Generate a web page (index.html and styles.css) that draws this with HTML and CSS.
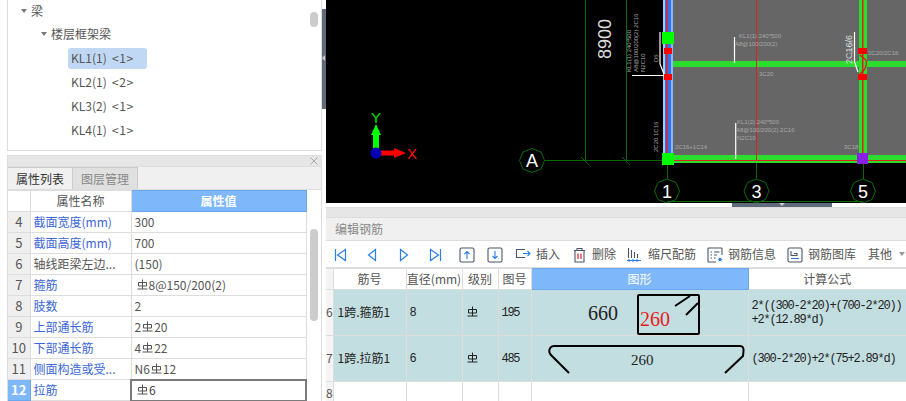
FILE: index.html
```html
<!DOCTYPE html>
<html lang="zh">
<head>
<meta charset="utf-8">
<title>编辑钢筋</title>
<link rel="stylesheet" href="styles.css">
</head>
<body>
<svg class="defs" width="0" height="0">
  <symbol id="bar" viewBox="0 0 11 11">
    <path d="M1.5 3.5h8v3.5h-8zM5.5 0.5v9.5M0.5 10h10" fill="none" stroke="currentColor" stroke-width="1"/>
  </symbol>
</svg>
<div class="app">
  <aside class="left">
    <div class="tree">
      <div class="tree-row lvl0"><i class="caret"></i>梁</div>
      <div class="tree-row lvl1"><i class="caret"></i>楼层框架梁</div>
      <div class="tree-row lvl2"><span class="node sel">KL1(1) &nbsp;<span class="tag">&lt;1&gt;</span></span></div>
      <div class="tree-row lvl2"><span class="node">KL2(1) &nbsp;<span class="tag">&lt;2&gt;</span></span></div>
      <div class="tree-row lvl2"><span class="node">KL3(2) &nbsp;<span class="tag">&lt;1&gt;</span></span></div>
      <div class="tree-row lvl2"><span class="node">KL4(1) &nbsp;<span class="tag">&lt;1&gt;</span></span></div>
      <div class="thumb tree-thumb"></div>
    </div>
    <div class="props">
      <div class="panel-head"><svg class="close" width="8" height="8" viewBox="0 0 8 8"><path d="M.5 .5L7.500 7.500M7.500 .5L.5 7.500"/></svg></div>
      <div class="tabs">
        <div class="tab active">属性列表</div>
        <div class="tab">图层管理</div>
      </div>
      <div class="prop-wrap">
        <table class="prop-table">
          <colgroup><col class="c-num"><col class="c-name"><col class="c-val"></colgroup>
          <tr class="prop-head"><th class="corner"></th><th>属性名称</th><th class="hl">属性值</th></tr>
          <tr><th>4</th><td class="link">截面宽度(mm)</td><td>300</td></tr>
          <tr><th>5</th><td class="link">截面高度(mm)</td><td>700</td></tr>
          <tr><th>6</th><td>轴线距梁左边...</td><td>(150)</td></tr>
          <tr><th>7</th><td class="link">箍筋</td><td><svg class="rb first"><use href="#bar"/></svg>8@150/200(2)</td></tr>
          <tr><th>8</th><td class="link">肢数</td><td>2</td></tr>
          <tr><th>9</th><td class="link">上部通长筋</td><td>2<svg class="rb"><use href="#bar"/></svg>20</td></tr>
          <tr><th>10</th><td class="link">下部通长筋</td><td>4<svg class="rb"><use href="#bar"/></svg>22</td></tr>
          <tr><th>11</th><td class="link">侧面构造或受...</td><td>N6<svg class="rb"><use href="#bar"/></svg>12</td></tr>
          <tr><th class="hl">12</th><td class="link">拉筋</td><td class="editing"><svg class="rb first"><use href="#bar"/></svg>6</td></tr>
        </table>
        <div class="thumb prop-thumb"></div>
      </div>
    </div>
  </aside>
  <div class="v-split"><i class="tri-left"></i></div>
  <main class="right">
    <svg class="canvas" viewBox="326 0 580 203" width="580" height="203">
      <rect x="326" y="0" width="580" height="203" fill="#000"/>
      <rect x="673" y="0" width="233" height="163" fill="#666"/>
      <g stroke="#0a6a0a" fill="none">
        <path d="M585.5 0V161M626.5 0V161M544 160.5H663M581 157l8 8M622 157l8 8"/>
        <path d="M667.5 163V179M756.5 163V179M863.5 163V179M667 201.5H863"/>
        <polygon points="532,148.500 541,152 544.500,160.500 541,169 532,172.500 523,169 519.500,160.500 523,152"/>
        <polygon points="667,179 676,182.500 679.500,191 676,199.500 667,203 658,199.500 654.500,191 658,182.500"/>
        <polygon points="756.500,179 765.500,182.500 769,191 765.500,199.500 756.500,203 747.500,199.500 744,191 747.500,182.500"/>
        <polygon points="863,179 872,182.500 875.500,191 872,199.500 863,203 854,199.500 850.500,191 854,182.500"/>
      </g>
      <g class="axis-label">
        <text x="532" y="167">A</text>
        <text x="667" y="198">1</text>
        <text x="756.500" y="198">3</text>
        <text x="863" y="198">5</text>
      </g>
      <text class="dim" transform="translate(611 59) rotate(-90)">8900</text>

      <path d="M373 153V134h6V153z" fill="#00ff00"/>
      <path d="M371 135l5-11 5 11z" fill="#00ff00"/>
      <path d="M376 153h18v-3v-2l12 5-12 5v-2v-3z" fill="#ff0000"/>
      <path d="M380 150.500h15v5h-15z" fill="#ff0000"/>
      <circle cx="376" cy="153" r="5.500" fill="#0000b4"/>
      <text class="ucs y" x="376" y="123">Y</text>
      <text class="ucs x" x="412" y="159">X</text>

      <!-- beams -->
      <rect x="673" y="61" width="233" height="6" fill="#2ddc2d"/>
      <rect x="673" y="155" width="233" height="8" fill="#2ddc2d"/>
      <rect x="859" y="0" width="8" height="163" fill="#2ddc2d"/>
      <rect x="663" y="0" width="10" height="163" fill="#2f74ea"/>
      <rect x="663" y="0" width="2" height="163" fill="#a4c8fb"/>
      <rect x="671" y="0" width="2" height="163" fill="#8ab6f6"/>
      <rect x="666" y="0" width="1.500" height="163" fill="#e02020"/>
      <path d="M673 160.500H906" stroke="#e02020" stroke-width="1"/>
      <path d="M756.500 0V161" stroke="#e02020" stroke-width="1"/>
      <rect x="862" y="0" width="1.500" height="161" fill="#e02020"/>

      <!-- columns -->
      <rect x="662" y="32" width="12" height="12" fill="#00ff00"/>
      <rect x="662" y="153" width="12" height="12" fill="#00ff00"/>
      <rect x="857" y="153" width="11" height="11" fill="#8a1fe6"/>
      <rect x="664" y="48" width="8" height="6" fill="#ff0000"/>
      <rect x="664" y="74" width="8" height="6" fill="#ff0000"/>
      <rect x="858" y="48" width="9" height="6" fill="#ff0000"/>
      <rect x="858" y="74" width="9" height="6" fill="#ff0000"/>
      <path d="M860 55l6 5c1 3 0 8-2 10l-4 4" fill="none" stroke="#e81010" stroke-width="1.200"/>

      <!-- leaders -->
      <g stroke="#fff" fill="none" stroke-width="1.200">
        <path d="M660 32V64L664 74M632 75.500H664"/>
        <path d="M734.500 37V63M735.700 123V159"/>
        <path d="M854.500 32V62L858 72"/>
      </g>
      <g class="note">
        <text x="739" y="38">KL1(1) 240*500</text>
        <text x="735" y="46">A8@100/200(2)</text>
        <text x="759" y="76">3C20</text>
        <text x="737" y="124">KL1(2) 240*500</text>
        <text x="736" y="132">A8@100/200(2) 2C16</text>
        <text x="737" y="140">N2C10</text>
        <text x="675" y="149">2C16+1C14</text>
        <text x="844" y="149">3C18</text>
        <text x="868" y="55">2C20/2C16</text>
        <text transform="translate(631 72) rotate(-90)">KL1(1) 240*500</text>
        <text transform="translate(638 72) rotate(-90)">A8@100/200(2) 2C16</text>
        <text transform="translate(645 72) rotate(-90)">N2C10</text>
        <text transform="translate(658 62) rotate(-90)">D6</text>
        <text transform="translate(658 152) rotate(-90)">2C20 1C16</text>
        <text transform="translate(853 54) rotate(-90)">2C25</text>
      </g>
      <text class="note big" transform="translate(852 64) rotate(-90)">2C16/6</text>
    </svg>
    <div class="h-split"><i class="tri-down"></i></div>
    <section class="editor">
      <div class="panel-head"></div>
      <div class="editor-title">编辑钢筋</div>
      <div class="toolbar">
        <button class="tb nav"><svg width="16" height="16" viewBox="0 0 16 16"><path d="M3.500 2V14M13.500 2.500L5.500 8L13.500 13.500Z"/></svg></button>
        <button class="tb nav"><svg width="16" height="16" viewBox="0 0 16 16"><path d="M11.500 2.500L4.500 8L11.500 13.500Z"/></svg></button>
        <button class="tb nav"><svg width="16" height="16" viewBox="0 0 16 16"><path d="M4.500 2.500L11.500 8L4.500 13.500Z"/></svg></button>
        <button class="tb nav"><svg width="16" height="16" viewBox="0 0 16 16"><path d="M12.500 2V14M2.500 2.500L10.500 8L2.500 13.500Z"/></svg></button>
        <button class="tb sq first-sq"><svg width="16" height="16" viewBox="0 0 16 16"><rect x="1" y="1" width="14" height="14" rx="1.500" class="dk"/><path d="M8 12V4.500M5.500 7L8 4.500L10.500 7" class="bl"/></svg></button>
        <button class="tb sq"><svg width="16" height="16" viewBox="0 0 16 16"><rect x="1" y="1" width="14" height="14" rx="1.500" class="dk"/><path d="M8 4V11.500M5.500 9L8 11.500L10.500 9" class="bl"/></svg></button>
        <button class="tb ins"><svg width="16" height="14" viewBox="0 0 16 14"><path d="M10 2.500H1.500V10.500H10" class="dk"/><path d="M8 6.500H15M12.500 4L15 6.500L12.500 9" class="bl"/></svg>插入</button>
        <button class="tb del"><svg width="13" height="16" viewBox="0 0 13 16"><path d="M1 3.500H12M4 3.500V1.500H9V3.500M2 3.500V15H11V3.500" class="dk"/><path d="M5 6.500V12M8 6.500V12" class="rd"/></svg>删除</button>
        <button class="tb scale"><svg width="14" height="15" viewBox="0 0 14 15"><path d="M1.500 1V11M4.500 3V11M7.500 5V11M10.500 7V11" class="dk"/><path d="M0 13.500H14M2 12V15M6 12V15M10 12V15" class="bl"/></svg>缩尺配筋</button>
        <button class="tb info"><svg width="16" height="16" viewBox="0 0 16 16"><path d="M15 8V1.500A.5.500 0 0 0 14.500 1H1.500A.5.500 0 0 0 1 1.500V14.500A.5.500 0 0 0 1.500 15H9" class="dk"/><path d="M3.500 5H5M3.500 8H5M3.500 11H5M7 5H12.500M7 8H10M7 11H8.500" class="dk"/><circle cx="13" cy="12.500" r="2.200" class="bf"/></svg>钢筋信息</button>
        <button class="tb lib"><svg width="16" height="16" viewBox="0 0 16 16"><rect x="1" y="1" width="14" height="14" rx="1.500" class="dk"/><path d="M4 4V8.500H10V6.500H7" class="dk"/><path d="M4 11.500H12" class="bl"/></svg>钢筋图库</button>
        <button class="tb more">其他<i class="caret grey"></i></button>
      </div>
      <table class="bar-table">
        <colgroup><col class="b-num"><col class="b-name"><col class="b-dia"><col class="b-grade"><col class="b-fig"><col class="b-shape"><col></colgroup>
        <tr class="bar-head"><th></th><th>筋号</th><th>直径(mm)</th><th>级别</th><th>图号</th><th class="hl">图形</th><th>计算公式</th></tr>
        <tr class="data">
          <th>6</th><td class="name">1跨.箍筋1</td><td class="m">8</td><td class="sym"><svg class="rb big"><use href="#bar"/></svg></td><td class="m">195</td>
          <td class="shape">
            <svg width="217" height="45" viewBox="531 289 217 45">
              <text class="dimtext large" x="587" y="319">660</text>
              <rect x="637" y="294" width="61" height="39" rx="1" class="steel"/>
              <path d="M674 305L689 295M685 314L697 302" class="steel"/>
              <text class="dimtext large red" x="639" y="325">260</text>
            </svg>
          </td>
          <td class="formula">2*((300-2*20)+(700-2*20))<br>+2*(12.89*d)</td>
        </tr>
        <tr class="data">
          <th>7</th><td class="name">1跨.拉筋1</td><td class="m">6</td><td class="sym"><svg class="rb big"><use href="#bar"/></svg></td><td class="m">485</td>
          <td class="shape">
            <svg width="217" height="45" viewBox="531 335 217 45">
              <path d="M568 372L549.500 353.500Q547 350 549.500 346.500Q551 345 553 345H739Q743 345 742.500 350L742 355L724 372" class="steel"/>
              <text class="dimtext" x="630" y="364">260</text>
            </svg>
          </td>
          <td class="formula">(300-2*20)+2*(75+2.89*d)</td>
        </tr>
        <tr class="empty"><th>8</th><td></td><td></td><td></td><td></td><td></td><td></td></tr>
      </table>
    </section>
  </main>
</div>
</body>
</html>
```
FILE: styles.css
```css
* { box-sizing: border-box; }
html, body { margin: 0; padding: 0; height: 401px; overflow: hidden; background: #fff; }
body { font: 12px/1.2 "Noto Sans CJK SC", "Open Sans", sans-serif; color: #444; }
.defs { position: absolute; }
.app { display: flex; width: 906px; height: 401px; overflow: hidden; }

/* left column */
.left { width: 322px; padding-left: 7px; flex: none; display: flex; flex-direction: column; }
.tree { position: relative; height: 151px; border: 1px solid #ddd; border-top: 0; padding-top: 0; overflow: hidden; }
.tree-row { height: 24px; display: flex; align-items: center; color: #555; }
.tree-row:first-child { height: 22px; }
.lvl0 { padding-left: 13px; }
.lvl1 { padding-left: 33px; }
.lvl2 { padding-left: 60px; }
.caret { display: inline-block; width: 0; height: 0; border: 3px solid transparent; border-top: 4px solid #777; border-bottom: 0; margin-right: 4px; }
.node { display: block; width: 79px; height: 21px; line-height: 20px; padding-left: 3px; border-radius: 3px; color: #555; }
.tag { letter-spacing: .6px; }
.sel { background: #c0d8f4; }
.thumb { position: absolute; width: 8px; background: #ccc; border-radius: 4px; }
.tree-thumb { left: 302px; top: 12px; height: 15px; }

.props { margin-top: 4px; flex: 1; border: 1px solid #ddd; border-bottom: 0; min-height: 0; overflow: hidden; }
.panel-head { height: 10px; background: #e6e6e6; border-bottom: 1px solid #ddd; position: relative; }
.props .panel-head { height: 11px; }
.close { position: absolute; right: 3px; top: 1px; fill: none; stroke: #aaa; stroke-width: 1; }
.tabs { display: flex; height: 23px; background: #f0f0f0; border-bottom: 1px solid #ddd; }
.tab { width: 65px; text-align: center; line-height: 21px; color: #888; background: #e0e0e0; border: 1px solid #ccc; border-width: 1px 1px 0 0; font-size: 12px; }
.tab.active { width: 65px; background: #f0f0f0; color: #333; }

.prop-wrap { position: relative; }
.prop-table { border-collapse: collapse; table-layout: fixed; width: 298px; }
.c-num { width: 22px; } .c-name { width: 101px; } .c-val { width: 175px; }
.prop-table tr { height: 21px; }
.prop-table th, .prop-table td { border: 1px solid #ddd; padding: 0 3px; font-weight: normal; white-space: nowrap; overflow: hidden; }
.prop-table tr > :first-child { border-left: 0; }
.prop-table th { background: #efefef; text-align: center; color: #555; padding: 0; font-size: 13px; }
.prop-head th { background: #fff; color: #555; font-size: 12px; }
.prop-table td { font-size: 12px; color: #555; }
.prop-table td.link { color: #3a66d8; }
.prop-table th.hl, .bar-table th.hl { background: #7fb8fa; color: #fff; border-color: #6aa8ee; }
.prop-table th.hl { font-weight: bold; }
.prop-table td.editing { border: 2px solid #7b7b7b; color: #444; }
.corner { border-top: 0; }
.rb { width: 11px; height: 11px; display: inline-block; vertical-align: 0; margin: 0 1px; color: #555; }
.rb.first { margin-left: 2px; }
.prop-thumb { left: 302px; top: 39px; height: 92px; }

/* splitters */
.v-split { width: 4px; flex: none; height: 401px; position: relative; }
.v-split::before { content: ""; display: block; height: 100px; margin-top: 9px; background: #5f6b78; }
.tri-left { position: absolute; left: 0; top: 55px; border: 3px solid transparent; border-right: 3px solid #c8ccd0; border-left: 0; }
.h-split { height: 4px; width: 100px; margin-left: 406px; background: #5f6b78; position: relative; }
.tri-down { position: absolute; left: 47px; top: 0; border: 3px solid transparent; border-top: 3px solid #c8ccd0; border-bottom: 0; }

/* canvas */
.right { width: 580px; flex: none; display: flex; flex-direction: column; }
.canvas { display: block; flex: none; }
.axis-label text { font: 18px "Liberation Sans", sans-serif; fill: #fff; text-anchor: middle; }
.dim { font: 18px "Liberation Sans", sans-serif; fill: #ddd; }
.ucs { font: 15px "Liberation Sans", sans-serif; text-anchor: middle; }
.ucs.y { fill: #00e000; }
.ucs.x { fill: #ff1010; }
.note text, .note { font: 6px "Liberation Sans", sans-serif; fill: #a8a8a8; }
.note.big { font-size: 9px; fill: #ddd; }

/* editor */
.editor { flex: 1; min-height: 0; border-top: 1px solid #ddd; overflow: hidden; }
.editor-title { height: 23px; line-height: 22px; padding-left: 9px; background: #f0f0f0; color: #888; border-bottom: 1px solid #ddd; }
.toolbar { height: 27px; display: flex; align-items: center; padding: 1px 0 0 6px; background: #fff; border-bottom: 1px solid #ddd; }
.tb { flex: none; display: flex; align-items: center; gap: 5px; border: 0; padding: 0; background: none; font: inherit; font-size: 12px; color: #555; white-space: nowrap; }
.tb svg { flex: none; fill: none; }
.nav { width: 32px; }
.nav svg path { stroke: #2b7de9; stroke-width: 1.200; fill: none; }
.sq { margin-right: 12px; }
.first-sq { margin-left: -1px; }
.dk { fill: none; stroke: #4a5666; stroke-width: 1.100; }
.bl { fill: none; stroke: #2b7de9; stroke-width: 1.100; }
.rd { fill: none; stroke: #e02020; stroke-width: 1.200; }
.bf { fill: #2b7de9; stroke: #fff; }
.del { margin-left: 13px; gap: 6px; }
.scale { margin-left: 11px; gap: 7px; }
.info { margin-left: 11px; gap: 5px; }
.lib { margin-left: 11px; gap: 5px; }
.more { margin-left: 12px; gap: 7px; }
.caret.grey { border-top-color: #999; margin: 0; }

.bar-table { border-collapse: collapse; table-layout: fixed; width: 580px; }
.b-num { width: 7px; } .b-name { width: 73px; } .b-dia { width: 56px; } .b-grade { width: 36px; } .b-fig { width: 33px; } .b-shape { width: 217px; }
.bar-table th, .bar-table td { border: 1px solid #ddd; padding: 0; font-weight: normal; white-space: nowrap; overflow: hidden; }
.bar-table tr > :first-child { border-left: 0; }
.bar-table tr > :last-child { border-right: 0; }
.bar-head { height: 21px; }
.bar-head th { text-align: center; color: #555; background: #fff; }
.bar-table tr > th:first-child { background: #f4f4f4; color: #555; font-size: 12px; text-align: left; overflow: visible; }
.data { height: 46px; }
.data td { background: #c2dee0; color: #222; }
.empty { height: 24px; }
.name { padding-left: 4px !important; font-size: 12px; }
.m { font: 12px "Liberation Mono", monospace; padding-left: 3px !important; letter-spacing: -1.300px; }
.sym { padding-left: 4px !important; }
.rb.big { color: #222; margin: 0; }
.shape svg { display: block; }
.steel { fill: none; stroke: #000; stroke-width: 2; }
.dimtext { font: 15px "Liberation Serif", serif; fill: #222; }
.dimtext.large { font-size: 20px; }
.dimtext.red { fill: #e81b1b; }
.formula { font: 12px/14px "Liberation Mono", monospace; letter-spacing: -1.200px; color: #222 !important; padding-left: 3px !important; }
```
